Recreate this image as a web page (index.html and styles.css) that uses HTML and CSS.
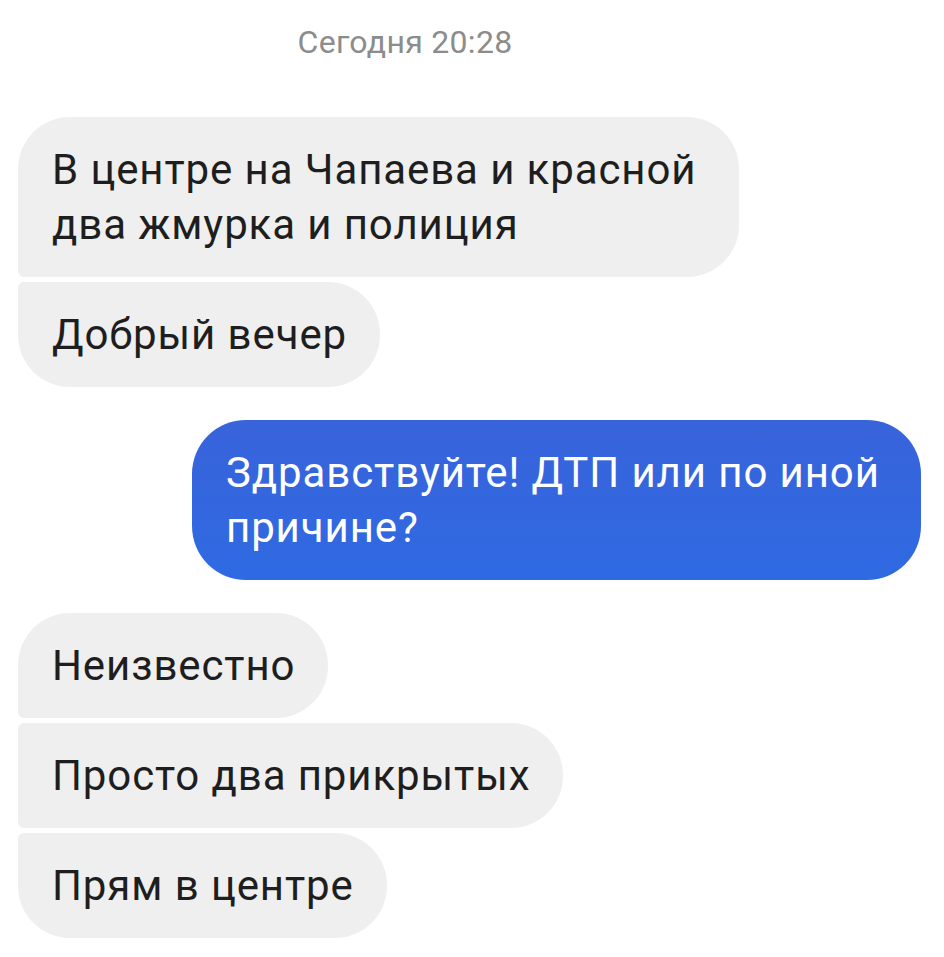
FILE: index.html
```html
<!DOCTYPE html>
<html lang="ru">

<head>
  <meta charset="UTF-8">
  <meta name="viewport" content="width=device-width, initial-scale=1">
  <title>Чат</title>
  <link rel="stylesheet" href="styles.css">
</head>

<body>
  <div class="chat">
    <div class="time">Сегодня 20:28</div>

    <div class="group in">
      <div class="msg first">В центре на Чапаева и красной два жмурка и полиция</div>
      <div class="msg last">Добрый вечер</div>
    </div>

    <div class="group out">
      <div class="msg">Здравствуйте! ДТП или по иной причине?</div>
    </div>

    <div class="group in">
      <div class="msg first">Неизвестно</div>
      <div class="msg">Просто два прикрытых</div>
      <div class="msg last">Прям в центре</div>
    </div>
  </div>
</body>

</html>
```

FILE: styles.css
```css
body {
  margin: 0;
  background-color: #FFFFFF;
  font-family: Roboto, "Noto Sans", sans-serif;
}

.chat {
  padding: 24px 23px 20px 18px;
}

.time {
  width: 774px;
  text-align: center;
  font-size: 32px;
  letter-spacing: 0.3px;
  color: #8C8C8C;
  line-height: 36px;
  margin-bottom: 57px;
}

.group {
  display: flex;
  flex-direction: column;
  gap: 5px;
  margin-bottom: 33px;
}

.group.in {
  align-items: flex-start;
}

.group.out {
  align-items: flex-end;
}

.msg {
  font-size: 42px;
  letter-spacing: 0.9px;
  line-height: 55px;
  padding: 25px 33px 25px 34px;
  border-radius: 6px 52px 52px 6px;
}

.in .msg {
  max-width: 654px;
  background-color: #EFEFEF;
  color: #1E1E1E;
}

.in .msg.first {
  border-top-left-radius: 52px;
}

.in .msg.last {
  border-bottom-left-radius: 52px;
}

.out .msg {
  max-width: 662px;
  background: linear-gradient(#3863DB, #2F6AE2);
  color: #FFFFFF;
  border-radius: 54px;
}
```
